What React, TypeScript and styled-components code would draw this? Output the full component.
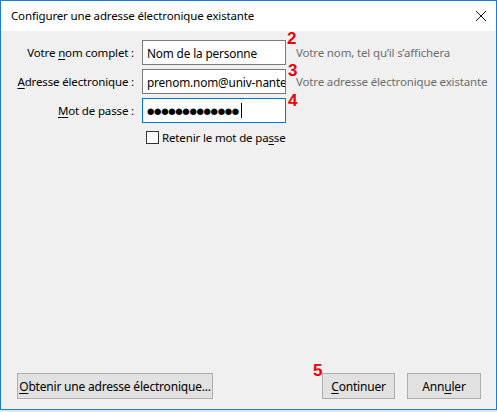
import React from "react";
import styled, { createGlobalStyle } from "styled-components";

const GlobalStyle = createGlobalStyle`
  html, body {
    margin: 0;
    padding: 0;
    background: #dfe6ee;
  }
  body {
    font-family: "Noto Sans", "DejaVu Sans", sans-serif;
    font-size: 11.5px;
    letter-spacing: -0.15px;
    color: #000;
  }
`;

const Window = styled.div`
  width: 497px;
  height: 410px;
  box-sizing: border-box;
  border: 1px solid #1c7ed2;
  display: flex;
  flex-direction: column;
  background: #f0f0f0;
`;

const TitleBar = styled.div`
  height: 30px;
  flex: none;
  background: #fff;
  display: flex;
  align-items: center;
  justify-content: space-between;
  padding: 0 9px 0 10px;
`;

const Title = styled.span`
  padding-bottom: 1px;
`;

const CloseButton = styled.span`
  display: flex;
  width: 12px;
  height: 12px;
`;

const Body = styled.div`
  flex: 1;
  display: flex;
  flex-direction: column;
  justify-content: space-between;
  padding: 9px 15px 10px 16px;
`;

const Form = styled.div`
  display: grid;
  grid-template-columns: 117px 144px auto;
  column-gap: 8px;
  row-gap: 4px;
  align-items: center;
  position: relative;
`;

const Label = styled.label`
  text-align: right;
  white-space: nowrap;
`;

const Key = styled.span`
  text-decoration: underline;
  text-underline-offset: 2px;
`;

const Field = styled.div<{ $focused?: boolean }>`
  height: 25px;
  box-sizing: border-box;
  border: 1px solid ${(p) => (p.$focused ? "#0078d7" : "#7a7a7a")};
  background: #fff;
  display: flex;
  align-items: center;
  padding: 0 0 0 4px;
  overflow: hidden;
  white-space: nowrap;
  font-size: 11.8px;
`;

const Dots = styled.span`
  font-size: 8.5px;
  letter-spacing: -0.35px;
  font-family: "DejaVu Sans", sans-serif;
`;

const Caret = styled.span`
  display: inline-block;
  width: 1px;
  height: 15px;
  background: #000;
  margin-left: 2px;
`;

const Hint = styled.span`
  color: #6d6d6d;
  white-space: nowrap;
  margin-left: 2px;
`;

const CheckRow = styled.label`
  grid-column: 2 / 4;
  display: flex;
  align-items: center;
  gap: 3px;
  margin-top: 3px;
  margin-left: 4px;
`;

const Box = styled.span`
  width: 13px;
  height: 13px;
  box-sizing: border-box;
  border: 1px solid #333;
  background: #fff;
`;

const Marker = styled.span<{ $top: number; $left: number }>`
  position: absolute;
  top: ${(p) => p.$top}px;
  left: ${(p) => p.$left}px;
  color: #e8000b;
  font-family: "Liberation Sans", Arial, sans-serif;
  font-weight: bold;
  font-size: 17px;
  letter-spacing: 0;
  line-height: 1;
`;

const Footer = styled.div`
  display: flex;
  align-items: center;
  position: relative;
`;

const Button = styled.button<{ $width: number }>`
  width: ${(p) => p.$width}px;
  height: 26px;
  box-sizing: border-box;
  border: 1px solid #adadad;
  background: #e1e1e1;
  font-family: inherit;
  font-size: 12px;
  letter-spacing: -0.2px;
  color: #000;
  padding: 0;
  white-space: nowrap;
`;

const Spacer = styled.div`
  flex: 1;
`;

const Gap = styled.div`
  width: 12px;
`;

const CloseIcon = () => (
  <svg width="12" height="12" viewBox="0 0 12 12">
    <path d="M1 1 L11 11 M11 1 L1 11" stroke="#111" strokeWidth="1" fill="none" />
  </svg>
);

export default function App() {
  return (
    <>
      <GlobalStyle />
      <Window>
        <TitleBar>
          <Title>Configurer une adresse électronique existante</Title>
          <CloseButton>
            <CloseIcon />
          </CloseButton>
        </TitleBar>
        <Body>
          <Form>
            <Label>
              Votre <Key>n</Key>om complet :
            </Label>
            <Field>Nom de la personne</Field>
            <Hint>Votre nom, tel qu’il s’affichera</Hint>

            <Label>
              <Key>A</Key>dresse électronique :
            </Label>
            <Field>prenom.nom@univ-nantes.fr</Field>
            <Hint>Votre adresse électronique existante</Hint>

            <Label>
              <Key>M</Key>ot de passe :
            </Label>
            <Field $focused>
              <Dots>●●●●●●●●●●●●●</Dots>
              <Caret />
            </Field>
            <span />

            <CheckRow>
              <Box />
              <span>
                Retenir le mot de pa<Key>s</Key>se
              </span>
            </CheckRow>

            <Marker $top={-10} $left={270}>2</Marker>
            <Marker $top={22} $left={271}>3</Marker>
            <Marker $top={52} $left={271}>4</Marker>
          </Form>

          <Footer>
            <Button $width={196}>
              <Key>O</Key>btenir une adresse électronique...
            </Button>
            <Spacer />
            <Marker $top={-11} $left={296}>5</Marker>
            <Button $width={73}>
              <Key>C</Key>ontinuer
            </Button>
            <Gap />
            <Button $width={74}>
              Ann<Key>u</Key>ler
            </Button>
          </Footer>
        </Body>
      </Window>
    </>
  );
}
